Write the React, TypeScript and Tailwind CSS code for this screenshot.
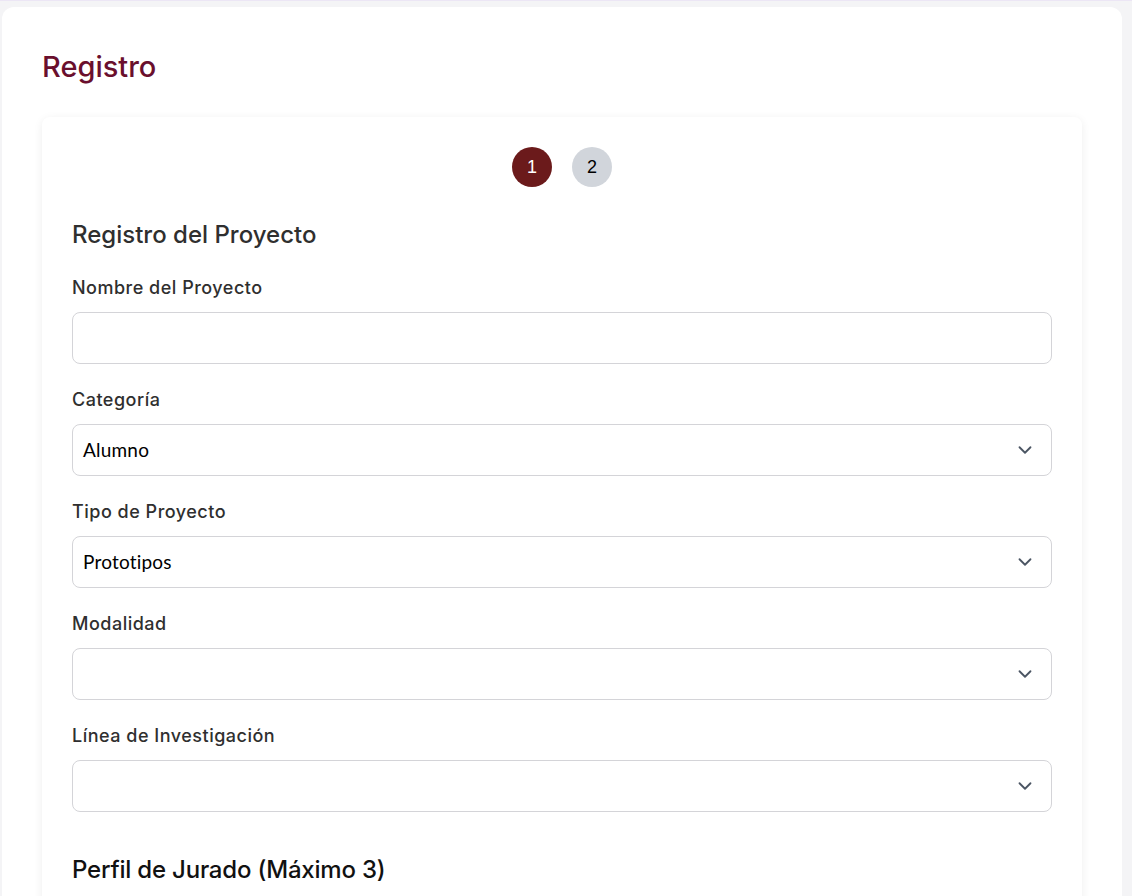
import React from "react";
import { ChevronDown } from "lucide-react";

const Field: React.FC<{ label: string; value?: string; select?: boolean }> = ({
  label,
  value,
  select,
}) => {
  return (
    <div className="flex flex-col mb-[23px]">
      <label className="text-[18px] leading-6 font-medium text-[#2f2f2f] tracking-[0.5px] mt-[1px] mb-[12px]">
        {label}
      </label>
      <div className="h-[52px] w-full rounded-lg border border-[#d4d4d8] bg-white flex items-center justify-between pl-[10px] pr-[15px]">
        <span className="text-[19px] tracking-[0.2px] text-black font-['Lato',sans-serif]">
          {value}
        </span>
        {select && (
          <ChevronDown size={22} strokeWidth={2} className="text-[#4b5563]" />
        )}
      </div>
    </div>
  );
};

export default function App() {
  return (
    <div className="min-h-screen bg-[#f4f4f6] pt-[6px] pl-[2px] border-t border-[#ece6f5] font-['Inter',sans-serif]">
      <div className="w-[1120px] bg-white rounded-xl px-10 pt-[42px] pb-10">
        <h1 className="text-[29px] leading-9 font-medium text-[#6a0f2d]">
          Registro
        </h1>
        <div className="mt-[32px] rounded-lg bg-white shadow-[0_2px_10px_rgba(0,0,0,0.07)] px-[30px] pt-[30px] pb-10">
          <div className="flex justify-center gap-5">
            <div className="w-10 h-10 rounded-full bg-[#6b1a1b] text-white flex items-center justify-center text-[18px] font-['Liberation_Sans',sans-serif]">
              1
            </div>
            <div className="w-10 h-10 rounded-full bg-[#d1d5db] text-black flex items-center justify-center text-[18px] font-['Liberation_Sans',sans-serif]">
              2
            </div>
          </div>
          <h2 className="mt-[33px] text-[24px] leading-[30px] font-medium text-[#2f2f2f]">
            Registro del Proyecto
          </h2>
          <div className="mt-[25px]">
            <Field label="Nombre del Proyecto" />
            <Field label="Categoría" value="Alumno" select />
            <Field label="Tipo de Proyecto" value="Prototipos" select />
            <Field label="Modalidad" select />
            <Field label="Línea de Investigación" select />
          </div>
          <h2 className="mt-[42px] text-[24px] leading-8 font-medium tracking-[-0.2px] text-[#111]">
            Perfil de Jurado (Máximo 3)
          </h2>
        </div>
      </div>
    </div>
  );
}
